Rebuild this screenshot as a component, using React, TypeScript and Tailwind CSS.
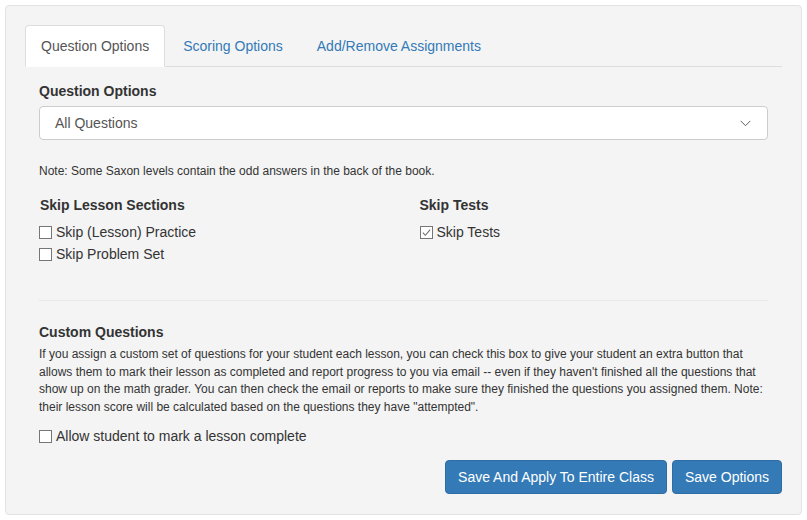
import { useState } from 'react';

const font = { fontFamily: '"Liberation Sans", Arial, sans-serif' };

function CheckBox({ label, checked }: { label: string; checked?: boolean }) {
  return (
    <label className="flex h-[22px] items-center text-[14px] text-[#333]">
      <span className="mr-[4px] flex h-[13px] w-[13px] shrink-0 items-center justify-center border border-[#767676] bg-white">
        {checked && (
          <svg viewBox="0 0 12 12" className="h-[11px] w-[11px]" fill="none">
            <path d="M2 6.2 L4.8 9 L10 2.8" stroke="#6b6b6b" strokeWidth="1.1" />
          </svg>
        )}
      </span>
      {label}
    </label>
  );
}

export default function App() {
  const [tab] = useState('question');
  const tabs = [
    { id: 'question', label: 'Question Options' },
    { id: 'scoring', label: 'Scoring Options' },
    { id: 'assign', label: 'Add/Remove Assignments' },
  ];

  return (
    <div className="min-h-[520px] bg-white pt-[5px]" style={font}>
      <div className="mx-[5px] rounded-[4px] border border-[#e3e3e3] bg-[#f4f4f4] px-[19px] pt-[19px] pb-[20px] text-[#333]">
        <ul className="flex border-b border-[#ddd]">
          {tabs.map((t) => (
            <li key={t.id} className="-mb-px mr-[2px]">
              <a
                href="#"
                className={
                  t.id === tab
                    ? 'block rounded-t-[4px] border border-[#ddd] border-b-white bg-white px-[15px] py-[10px] text-[14px] leading-[20px] text-[#555]'
                    : 'block rounded-t-[4px] border border-transparent px-[15px] py-[10px] text-[14px] leading-[20px] text-[#337ab7]'
                }
              >
                {t.label}
              </a>
            </li>
          ))}
        </ul>

        <div className="px-[14px] pt-[14px]">
          <div className="mb-[5px] text-[14px] font-bold leading-[20px]">
            Question Options
          </div>
          <div className="flex h-[34px] items-center justify-between rounded-[4px] border border-[#ccc] bg-white pr-[16px] pl-[15px] text-[14px] text-[#555]">
            <span>All Questions</span>
            <svg viewBox="0 0 12 8" className="h-[7px] w-[11px]" fill="none">
              <path d="M0.5 1 L6 6.5 L11.5 1" stroke="#555" strokeWidth="1.1" />
            </svg>
          </div>

          <p className="mt-[23px] text-[12px] leading-[17px]">
            Note: Some Saxon levels contain the odd answers in the back of the book.
          </p>

          <div className="mt-[15px] grid grid-cols-2 -mx-[15px]">
            <div className="px-[15px]">
              <div className="mb-[6px] pl-px text-[14px] font-bold leading-[20px]">
                Skip Lesson Sections
              </div>
              <CheckBox label="Skip (Lesson) Practice" />
              <CheckBox label="Skip Problem Set" />
            </div>
            <div className="px-[15px] pl-[16px]">
              <div className="mb-[6px] text-[14px] font-bold leading-[20px]">
                Skip Tests
              </div>
              <CheckBox label="Skip Tests" checked />
            </div>
          </div>

          <hr className="mt-[35px] border-t border-[#e8e8e8]" />

          <div className="mt-[21px] mb-[4px] text-[14px] font-bold leading-[20px]">
            Custom Questions
          </div>
          <p className="text-[12px] leading-[17.6px]">
            If you assign a custom set of questions for your student each lesson, you can
            check this box to give your student an extra button that allows them to mark
            their lesson as completed and report progress to you via email -- even if they
            haven't finished all the questions that show up on the math grader. You can then
            check the email or reports to make sure they finished the questions you assigned
            them. Note: their lesson score will be calculated based on the questions they
            have "attempted".
          </p>
          <div className="mt-[9px]">
            <CheckBox label="Allow student to mark a lesson complete" />
          </div>
        </div>

        <div className="mt-[13px] flex justify-end gap-[5px]">
          <button className="h-[34px] rounded-[4px] border border-[#2e6da4] bg-[#337ab7] px-[12px] text-[14px] text-white">
            Save And Apply To Entire Class
          </button>
          <button className="h-[34px] rounded-[4px] border border-[#2e6da4] bg-[#337ab7] px-[12px] text-[14px] text-white">
            Save Options
          </button>
        </div>
      </div>
    </div>
  );
}
